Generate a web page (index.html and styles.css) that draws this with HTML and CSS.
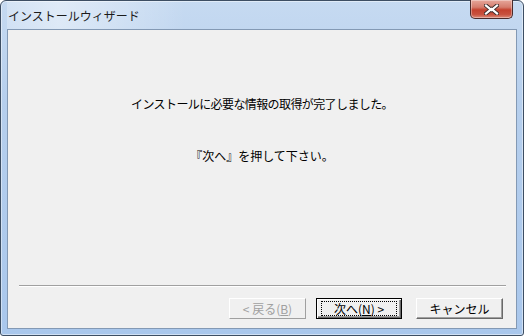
FILE: index.html
```html
<!DOCTYPE html>
<html lang="ja">
<head>
<meta charset="utf-8">
<link rel="stylesheet" href="styles.css">
</head>
<body>
<div class="window">
  <div class="titlebar">
    <span class="title">インストールウィザード</span>
    <div class="close">
      <svg width="15" height="11" viewBox="0 0 15 11">
        <path d="M2 1.5 L7.5 6 L13 1.5 M2 9.5 L7.5 5 L13 9.5" fill="none" stroke="#3a2a2a" stroke-width="4" stroke-linecap="square"/>
        <path d="M2 1.5 L7.5 6 L13 1.5 M2 9.5 L7.5 5 L13 9.5" fill="none" stroke="#ffffff" stroke-width="2.2" stroke-linecap="square"/>
      </svg>
    </div>
  </div>
  <div class="content">
    <div class="message">
      <p class="line first">インストールに必要な情報の取得が完了しました。</p>
      <p class="line second">『次へ』を押して下さい。</p>
    </div>
    <div class="spacer"></div>
    <div class="separator"></div>
    <div class="buttons">
      <div class="btn back disabled"><span>&lt; 戻る(<u>B</u>)</span></div>
      <div class="btn next default"><span class="focus">次へ(<u>N</u>) &gt;</span></div>
      <div class="btn cancel"><span>キャンセル</span></div>
    </div>
  </div>
</div>
</body>
</html>
```
FILE: styles.css
```css
html, body {
  margin: 0;
  padding: 0;
  width: 524px;
  height: 336px;
  overflow: hidden;
  background: #ffffff;
}
.window {
  position: relative;
  box-sizing: border-box;
  width: 524px;
  height: 336px;
  border: 1px solid #3d4e63;
  border-radius: 6px 6px 3px 3px;
  background: linear-gradient(180deg, #c6daf1 0%, #b6cfed 30%, #a9c7ec 100%);
  box-shadow: inset 0 0 0 1px rgba(255,255,255,0.45);
  padding: 0 6px 6px 6px;
  display: flex;
  flex-direction: column;
  font-family: "Noto Sans CJK JP", "Noto Sans", sans-serif;
}
.titlebar {
  height: 28px;
  display: flex;
  align-items: center;
  background: linear-gradient(90deg, rgba(255,255,255,0.25) 0%, rgba(255,255,255,0.45) 10%, rgba(255,255,255,0) 35%);
}
.title {
  font-size: 12px;
  color: #1b1b1b;
  margin-left: 1px;
  margin-top: 1px;
}
.close {
  position: absolute;
  left: 469px;
  top: -1px;
  width: 41px;
  height: 18px;
  border: 1px solid #4a2b2b;
  border-top: none;
  border-radius: 0 0 5px 5px;
  background: linear-gradient(180deg, #e7a79b 0%, #d57c6d 40%, #c4412e 55%, #c8513e 80%, #dc8a78 100%);
  display: flex;
  align-items: center;
  justify-content: center;
  box-shadow: inset 0 0 0 1px rgba(255,255,255,0.35);
}
.content {
  flex: 1;
  border: 1px solid #8399b4;
  background: #f0f0f0;
  display: flex;
  flex-direction: column;
  padding-top: 66px;
}
.message {
  text-align: center;
}
.line {
  margin: 0;
  font-size: 12px;
  line-height: 16px;
  color: #000;
}
.line.first {
  letter-spacing: -0.6px;
}
.line.second {
  margin-top: 36px;
}
.spacer {
  flex: 1;
}
.separator {
  margin: 0 10px 0 11px;
  height: 1px;
  background: #a0a0a0;
  border-bottom: 1px solid #ffffff;
}
.buttons {
  display: flex;
  justify-content: flex-end;
  margin-top: 11px;
  padding: 0 13px 9px 0;
  height: 21px;
}
.btn {
  box-sizing: border-box;
  height: 21px;
  display: flex;
  align-items: center;
  justify-content: center;
  font-size: 12px;
  color: #000;
  background: #f0f0f0;
  border-top: 1px solid #ffffff;
  border-left: 1px solid #ffffff;
  border-right: 1px solid #696969;
  border-bottom: 1px solid #696969;
  box-shadow: inset -1px -1px 0 #a0a0a0;
}
.back {
  width: 77px;
  margin-right: 10px;
}
.next {
  width: 86px;
  margin-right: 14px;
}
.cancel {
  width: 87px;
}
.disabled {
  color: #a0a0a0;
  border-right-color: #a0a0a0;
  border-bottom-color: #a0a0a0;
  box-shadow: none;
}
.default {
  border: 1px solid #000;
  box-shadow: inset 1px 1px 0 #ffffff, inset -1px -1px 0 #696969, inset -2px -2px 0 #a0a0a0;
}
.focus {
  box-sizing: border-box;
  width: 76px;
  height: 15px;
  line-height: 13px;
  border: 1px dotted #000;
  text-align: center;
}
u {
  text-decoration: underline;
  text-underline-offset: 1px;
}
```
